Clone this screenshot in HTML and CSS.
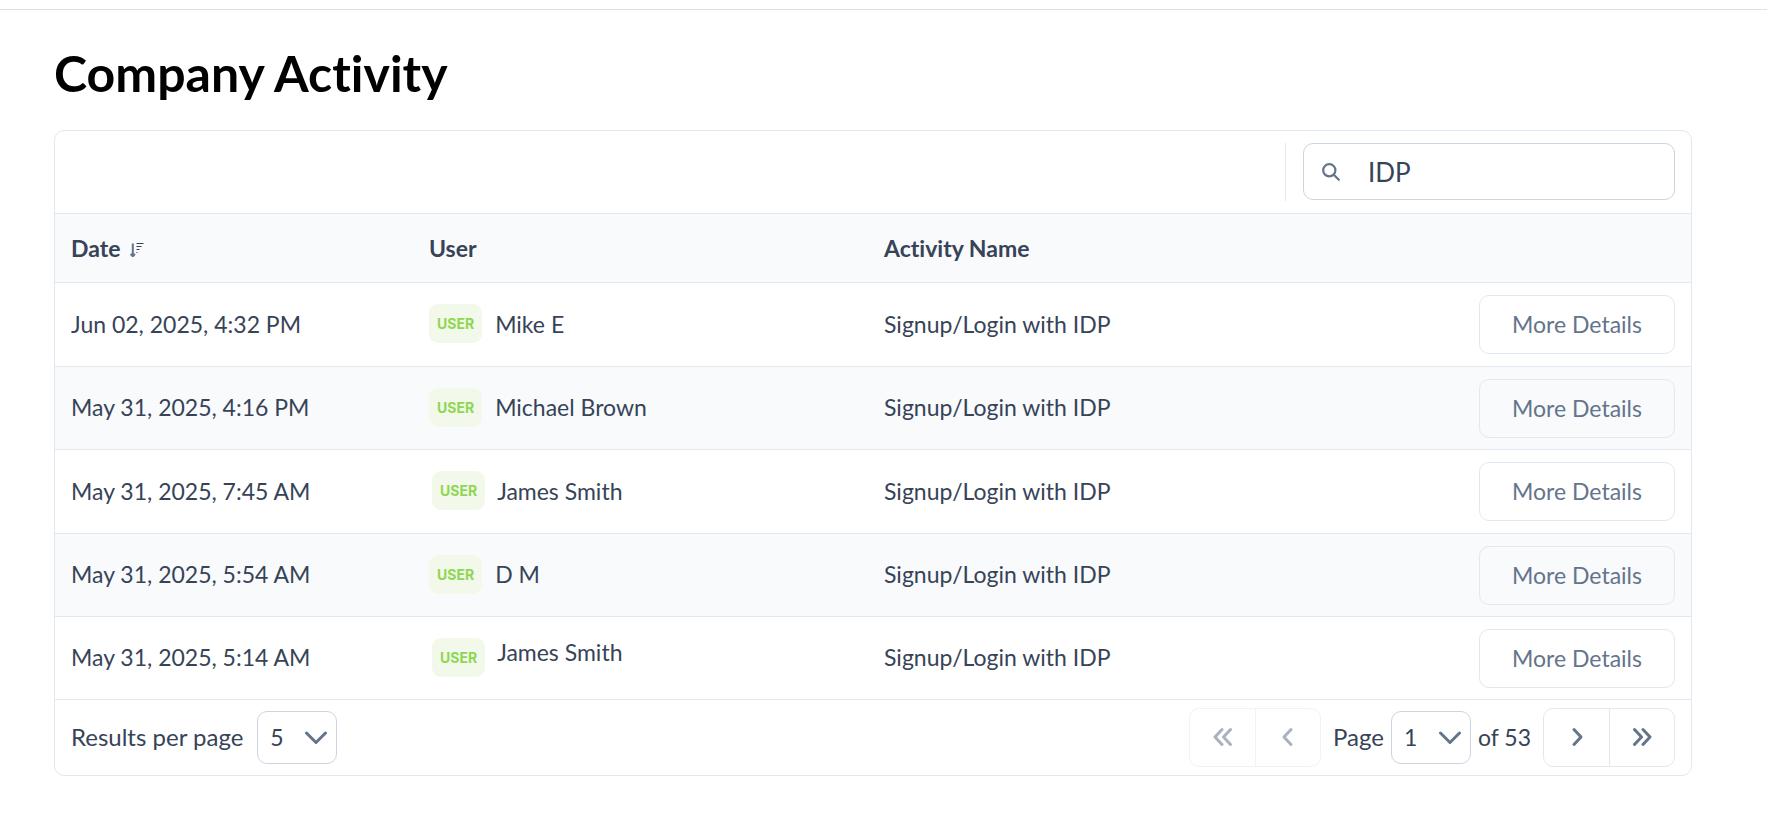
FILE: index.html
```html
<!DOCTYPE html>
<html lang="en">
<head>
<meta charset="utf-8">
<meta name="viewport" content="width=device-width, initial-scale=1">
<title>Company Activity</title>
<link rel="stylesheet" href="styles.css">
</head>
<body>
<main class="page">
  <h1 class="page-title">Company Activity</h1>
  <section class="card">
    <div class="toolbar">
      <div class="search-area">
        <label class="search">
          <svg class="search-icon" viewBox="0 0 18 18" aria-hidden="true"><circle cx="7.3" cy="7.3" r="6.1"/><path d="M11.800 11.800l5 5"/></svg>
          <input class="search-input" type="text" value="IDP" aria-label="Search">
        </label>
      </div>
    </div>
    <table class="activity">
      <colgroup><col class="col-date"><col class="col-user"><col><col class="col-action"></colgroup>
      <thead>
        <tr>
          <th scope="col"><span class="sortable">Date <svg class="sort-icon" viewBox="0 0 14 14" aria-hidden="true"><path class="sort-arrow" d="M2.800.5v12.500M.6 11l2.200 2.200L5 11"/><path d="M6.500.5H13.500M6.500 3.500h5M6.500 6.500h3M6.500 9.500h1"/></svg></span></th>
          <th scope="col">User</th>
          <th scope="col">Activity Name</th>
          <td></td>
        </tr>
      </thead>
      <tbody>
        <tr><td>Jun 02, 2025, 4:32 PM</td><td><div class="user"><span class="badge">USER</span>Mike E</div></td><td>Signup/Login with IDP</td><td class="action"><button class="btn" type="button">More Details</button></td></tr>
        <tr><td>May 31, 2025, 4:16 PM</td><td><div class="user"><span class="badge">USER</span>Michael Brown</div></td><td>Signup/Login with IDP</td><td class="action"><button class="btn" type="button">More Details</button></td></tr>
        <tr><td>May 31, 2025, 7:45 AM</td><td><div class="user user-inset"><span class="badge">USER</span>James Smith</div></td><td>Signup/Login with IDP</td><td class="action"><button class="btn" type="button">More Details</button></td></tr>
        <tr><td>May 31, 2025, 5:54 AM</td><td><div class="user"><span class="badge">USER</span>D M</div></td><td>Signup/Login with IDP</td><td class="action"><button class="btn" type="button">More Details</button></td></tr>
        <tr><td>May 31, 2025, 5:14 AM</td><td><div class="user user-inset user-top"><span class="badge">USER</span>James Smith</div></td><td>Signup/Login with IDP</td><td class="action"><button class="btn" type="button">More Details</button></td></tr>
      </tbody>
    </table>
    <footer class="footer">
      <div class="per-page">
        <label for="per-page">Results per page</label>
        <span class="select"><select id="per-page"><option>5</option></select><svg class="chevron" viewBox="0 0 22 14" aria-hidden="true"><path d="M1.500 2L11 11.500 20.500 2"/></svg></span>
      </div>
      <nav class="pager" aria-label="Pagination">
        <div class="group group-off">
          <button type="button" disabled aria-label="First page"><svg class="arrow" viewBox="0 0 20 20" aria-hidden="true"><path d="M9 2.500L2 10l7 7.500M17.500 2.500l-7 7.500 7 7.500"/></svg></button>
          <button type="button" disabled aria-label="Previous page"><svg class="arrow" viewBox="0 0 20 20" aria-hidden="true"><path d="M13 2.500L6 10l7 7.500"/></svg></button>
        </div>
        <div class="page-pick">
          <label for="page">Page</label>
          <span class="select"><select id="page"><option>1</option></select><svg class="chevron" viewBox="0 0 22 14" aria-hidden="true"><path d="M1.500 2L11 11.500 20.500 2"/></svg></span>
          <span class="page-total">of 53</span>
        </div>
        <div class="group">
          <button type="button" aria-label="Next page"><svg class="arrow" viewBox="0 0 20 20" aria-hidden="true"><path d="M7 2.500l7 7.500-7 7.500"/></svg></button>
          <button type="button" aria-label="Last page"><svg class="arrow" viewBox="0 0 20 20" aria-hidden="true"><path d="M2.500 2.500l7 7.500-7 7.500M11 2.500l7 7.500-7 7.500"/></svg></button>
        </div>
      </nav>
    </footer>
  </section>
</main>
</body>
</html>
```
FILE: styles.css
```css
* { box-sizing: border-box; }
body {
  margin: 9px 0 0;
  border-top: 1px solid #e0e0e0;
  background: #fff;
  color: #374357;
  font: 23px/28px Lato, "Liberation Sans", sans-serif;
  font-variant-ligatures: none;
}
button, input, select { font: inherit; color: inherit; }
svg { fill: none; stroke: #64748b; stroke-linecap: round; stroke-linejoin: round; }

.page { padding: 33px 75px 40px 54px; }
.page-title { margin: 0 0 27px; color: #000; font-size: 50px; line-height: 60px; font-weight: 700; }

.card { border: 1px solid #e2e8f0; border-radius: 10px; }

.toolbar { display: flex; justify-content: flex-end; padding: 12px 16px; }
.search-area { height: 58px; padding-left: 17px; border-left: 1px solid #e2e8f0; }
.search {
  display: flex;
  align-items: center;
  width: 372px;
  height: 57px;
  padding: 0 18px;
  border: 1px solid #cbd5e1;
  border-radius: 10px;
}
.search-icon { flex: none; width: 18px; height: 18px; margin-right: 28px; stroke-width: 2.2; }
.search-input { flex: 1; min-width: 0; padding: 0; border: 0; outline: 0; background: none; font-size: 26px; }

.activity { width: 100%; border-collapse: separate; border-spacing: 0; table-layout: fixed; }
.col-date { width: 358px; }
.col-user { width: 455px; }
.col-action { width: 228px; }
.activity th, .activity td { padding: 12px 16px; border-top: 1px solid #e2e8f0; text-align: left; }
.activity thead tr { height: 69px; background: #f8fafc; }
.activity tbody td { padding-bottom: 14px; }
.activity tbody tr:nth-child(even) { background: #f8fafc; }
.activity tbody .action { padding-bottom: 12px; }
.activity tbody tr:nth-child(even) .action,
.activity tbody tr:last-child .action { padding-bottom: 11px; }
.sortable { display: flex; align-items: center; gap: 10px; }
.sort-icon { width: 14px; height: 14px; margin-top: 3px; stroke: #374357; stroke-width: 1; stroke-linecap: butt; }
.sort-arrow { stroke: #64748b; stroke-width: 2; }
.user { display: flex; align-items: center; gap: 13px; }
.user-inset { padding-left: 3px; gap: 12px; }
.user-top { align-items: flex-start; }
.badge {
  padding: 9px 8px;
  border-radius: 9px;
  background: #f2f9eb;
  color: #8fd653;
  font: 700 14px/21px Inter, sans-serif;
}
.btn {
  display: block;
  width: 100%;
  height: 59px;
  padding: 0 16px 2px;
  border: 1px solid #e2e8f0;
  border-radius: 10px;
  background: none;
  color: #64748b;
}

.footer { display: flex; align-items: center; justify-content: space-between; padding: 8px 16px; border-top: 1px solid #e2e8f0; }
.footer label { padding-bottom: 2px; font-size: 24px; }
.page-total { padding-bottom: 2px; }
.per-page { display: flex; align-items: center; gap: 14px; }
.page-pick { display: flex; align-items: center; gap: 7px; }
.pager { display: flex; align-items: center; gap: 12px; }
.select { display: grid; grid-template-columns: 1fr; align-items: center; width: 80px; }
.select select {
  grid-area: 1 / 1;
  appearance: none;
  width: 100%;
  height: 53px;
  padding: 0 12px 2px;
  border: 1px solid #cbd5e1;
  border-radius: 10px;
  background: none;
}
.chevron { grid-area: 1 / 1; justify-self: end; width: 22px; height: 14px; margin-right: 10px; stroke-width: 3; pointer-events: none; }
.group { display: flex; border: 1px solid #e2e8f0; border-radius: 10px; }
.group button {
  display: grid;
  place-items: center;
  width: 65px;
  height: 57px;
  padding: 0 0 2px;
  border: 0;
  background: none;
}
.group button + button { border-left: 1px solid #e2e8f0; }
.group-off { opacity: 0.55; }
.arrow { width: 20px; height: 20px; stroke-width: 3; }
```
